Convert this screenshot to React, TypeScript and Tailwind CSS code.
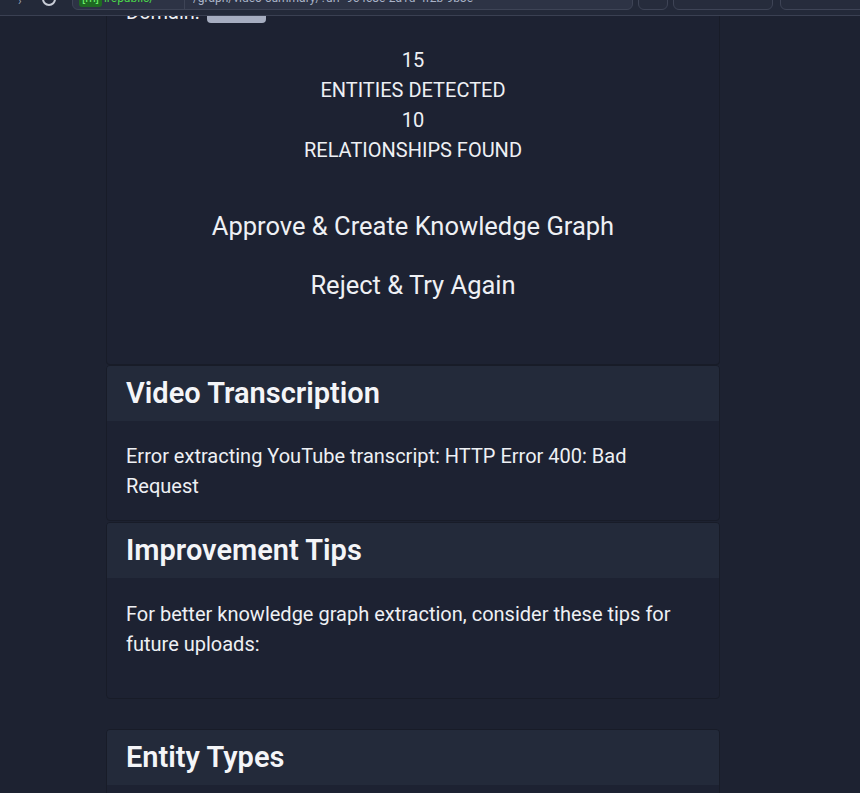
import React from 'react';

const FONT = { fontFamily: 'Roboto, "Noto Sans", sans-serif' };

const Toolbar = () => (
  <div className="absolute left-0 right-0 top-0 h-[16px] overflow-hidden border-b border-[#3a4052] bg-[#232939]">
    <div className="relative h-full">
      <span className="absolute left-[18px] top-[-8px] text-[12px] text-[#9aa3b5]">›</span>
      <span className="absolute left-[42px] top-[-8px] h-[14px] w-[14px] rounded-full border-2 border-[#c8ccd6]" />
      <div className="absolute left-[72px] top-[-14px] flex h-[24px] w-[561px] items-center rounded-b-[6px] border border-[#3e4456] bg-[#2d3345] text-[12px]">
        <span className="ml-[6px] rounded-[3px] bg-[#1f6a22] px-[3px] text-[#6cf06c]">[m]</span>
        <span className="ml-[2px] w-[80px] text-[#4ad34a]">irepublic/</span>
        <span className="h-full border-l border-[#3e4456]" />
        <span className="ml-[8px] truncate text-[#aab3c8]">/graph/video-summary/?url=9c4c8e-2a1d-4f2b-9b3e</span>
      </div>
      <div className="absolute left-[638px] top-[-14px] h-[24px] w-[30px] rounded-b-[6px] border border-[#3e4456] bg-[#262c3c]" />
      <div className="absolute left-[673px] top-[-14px] h-[24px] w-[100px] rounded-b-[6px] border border-[#3e4456] bg-[#262c3c]" />
      <div className="absolute left-[780px] top-[-14px] h-[24px] w-[100px] rounded-b-[6px] border border-[#3e4456] bg-[#262c3c]" />
    </div>
  </div>
);

const Section = ({ title, children, className = '' }: { title: string; children?: React.ReactNode; className?: string }) => (
  <div className={`overflow-hidden rounded-[4px] border border-[#181c28] bg-[#1d2232] ${className}`}>
    <div className="flex h-[55px] items-center bg-[#232a3a] px-[19px]">
      <h2 className="text-[29px] font-semibold text-[#f4f5f8]">{title}</h2>
    </div>
    {children}
  </div>
);

export default function App() {
  return (
    <div className="relative h-[793px] w-[860px] overflow-hidden bg-[#1d2231] text-[#eef0f4]" style={FONT}>
      <div className="ml-[106px] flex w-[614px] flex-col">
        <div className="mt-[-3px] rounded-b-[4px] border-x border-b border-[#181c28] bg-[#1d2232] pb-[61px]">
          <div className="flex h-[30px] items-center gap-[7px] px-[19px] text-[20px]">
            <span>Domain:</span>
            <span className="mt-[-2px] h-[24px] w-[59px] rounded-[4px] bg-[#a6adc0] text-center text-[14px] leading-[24px] text-[#f5f6fa]">video</span>
          </div>
          <div className="mt-[18px] flex flex-col items-center text-[20px] leading-[30px]">
            <div>15</div>
            <div>ENTITIES DETECTED</div>
            <div>10</div>
            <div>RELATIONSHIPS FOUND</div>
          </div>
          <div className="mt-[43px] flex flex-col items-center gap-[23px] text-[25.5px] leading-[36px]">
            <button>Approve &amp; Create Knowledge Graph</button>
            <button>Reject &amp; Try Again</button>
          </div>
        </div>

        <Section title="Video Transcription">
          <div className="px-[19px] pb-[19px] pt-[20px] text-[20px] leading-[30px]">
            Error extracting YouTube transcript: HTTP Error 400: Bad
            <br />
            Request
          </div>
        </Section>

        <Section title="Improvement Tips" className="mt-[1px]">
          <div className="px-[19px] pb-[39px] pt-[21px] text-[20px] leading-[30px]">
            For better knowledge graph extraction, consider these tips for future uploads:
          </div>
        </Section>

        <Section title="Entity Types" className="mt-[30px]">
          <div className="h-[40px]" />
        </Section>
      </div>
      <Toolbar />
    </div>
  );
}
